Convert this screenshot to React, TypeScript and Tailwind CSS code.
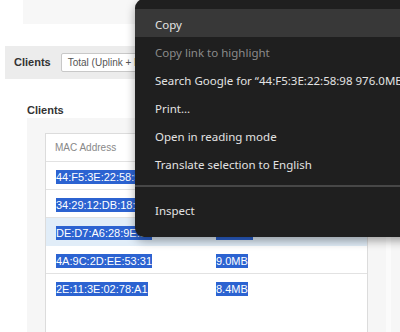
import React from "react";

const sel = "bg-[#2c63d1] text-white";

function Row({ mac, val, hover, border = true }: { mac: string; val: string; hover?: boolean; border?: boolean }) {
  return (
    <div className={`flex h-[28px] items-center ${border ? "border-b border-[#e2e2e2]" : ""} ${hover ? "bg-[#e1edf8]" : ""}`}>
      <div className="w-[170px] pl-[10px]">
        <span className={`${sel} text-[11px] leading-[14px] py-[1px]`}>{mac}</span>
      </div>
      <div>
        <span className={`${sel} text-[11px] leading-[14px] py-[1px]`}>{val}</span>
      </div>
    </div>
  );
}

function MenuItem({ label, active, disabled }: { label: string; active?: boolean; disabled?: boolean }) {
  return (
    <div
      className={`h-[28px] flex items-center pl-[20px] pt-[3px] whitespace-nowrap text-[11.5px] ${active ? "bg-[#383838]" : ""} ${disabled ? "text-[#8b8b8b]" : "text-[#e3e3e3]"}`}
    >
      {label}
    </div>
  );
}

export default function App() {
  return (
    <div className="relative w-[400px] h-[332px] overflow-hidden bg-white" style={{ fontFamily: '"Liberation Sans", Arial, sans-serif' }}>
      <div className="ml-[23px] w-[360px] h-[24px] bg-[#f7f7f7]" />
      <div className="mt-[22px] ml-[5px] w-[390px] h-[33px] bg-[#ececec] flex items-center pl-[9px]">
        <span className="text-[11px] font-bold text-[#333]">Clients</span>
        <div className="ml-[10px] h-[19px] w-[120px] bg-white border border-[#c8c8c8] rounded-[2px] flex items-center pl-[6px] text-[10px] text-[#555] whitespace-nowrap">
          Total (Uplink + Downlink)
        </div>
      </div>
      <div className="mt-[24px] ml-[27px] text-[11px] font-bold text-[#333] leading-[14px]">Clients</div>
      <div className="flex mt-[1px]">
        <div className="ml-[27px] w-[359px] h-[214px] bg-[#f6f6f6] pt-[15px] pl-[18px]">
          <div className="w-[323px] h-[200px] bg-white border border-b-0 border-[#dcdcdc]">
            <div className="h-[28px] flex items-center pl-[9px] border-b border-[#e2e2e2] text-[10px] text-[#888]">MAC Address</div>
            <Row mac="44:F5:3E:22:58:98" val="976.0MB" />
            <Row mac="34:29:12:DB:18:7C" val="120.3MB" />
            <Row mac="DE:D7:A6:28:9E:51" val="11.2MB" hover border={false} />
            <Row mac="4A:9C:2D:EE:53:31" val="9.0MB" />
            <Row mac="2E:11:3E:02:78:A1" val="8.4MB" border={false} />
          </div>
        </div>
        <div className="w-[5px] h-[214px] bg-[#fbfbfb]" />
        <div className="w-[9px] h-[214px] bg-[#f6f6f6]" />
      </div>

      <div
        className="absolute left-[135px] top-[-1px] w-[300px] h-[238px] bg-[#1f1f1f] rounded-[9px] pt-[10px] shadow-[0_4px_10px_rgba(0,0,0,0.35)]"
        style={{ fontFamily: '"Noto Sans", "Open Sans", sans-serif' }}
      >
        <MenuItem label="Copy" active />
        <MenuItem label="Copy link to highlight" disabled />
        <MenuItem label={'Search Google for \u201C44:F5:3E:22:58:98 976.0MB\u2026\u201D'} />
        <MenuItem label="Print..." />
        <MenuItem label="Open in reading mode" />
        <MenuItem label="Translate selection to English" />
        <div className="h-[18px] flex items-center">
          <div className="w-full h-[2px] bg-[#474747]" />
        </div>
        <MenuItem label="Inspect" />
      </div>
    </div>
  );
}
